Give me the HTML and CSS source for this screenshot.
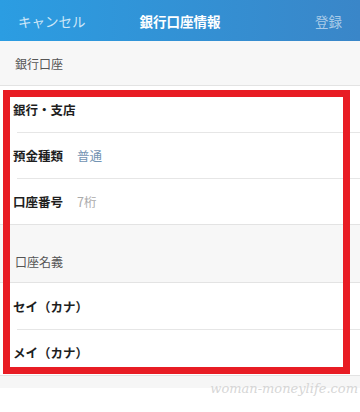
FILE: index.html
```html
<!DOCTYPE html>
<html lang="ja">
<head>
<meta charset="UTF-8" />
<meta name="viewport" content="width=device-width, initial-scale=1" />
<title>銀行口座情報</title>
<link rel="stylesheet" href="styles.css">
</head>
<body>

<header class="barra">
  <span class="cancelar">キャンセル</span>
  <span class="titulo">銀行口座情報</span>
  <span class="registrar">登録</span>
</header>

<main class="conteudo">
  <div class="secao">銀行口座</div>

  <div class="grupo">
    <div class="linha"><span class="rotulo">銀行・支店</span></div>
    <div class="linha"><span class="rotulo">預金種類</span><span class="valor azul">普通</span></div>
    <div class="linha"><span class="rotulo">口座番号</span><span class="valor cinza">7桁</span></div>

    <div class="secao secao-alta">口座名義</div>
    <div class="linha"><span class="rotulo">セイ（カナ）</span></div>
    <div class="linha ultima"><span class="rotulo">メイ（カナ）</span></div>

    <!-- destaque vermelho por cima das linhas -->
    <div class="destaque"></div>
  </div>

  <div class="rodape">
    <span class="marca">woman-moneylife.com</span>
  </div>
</main>

</body>
</html>
```

FILE: styles.css
```css
/* Reset e básicos */
body, html {
  margin: 0; padding: 0;
  font-family: "Noto Sans CJK JP", "Noto Sans", sans-serif;
  background: #fff;
  color: #222;
}

.barra {
  height: 41px;
  background: linear-gradient(to right, #2b9de2, #3a86c8);
  display: flex;
  align-items: center;
  justify-content: space-between;
  padding: 0 18px;
  font-size: 13.5px;
}
.cancelar {
  color: #cfe7f8;
  width: 70px;
}
.titulo {
  color: #fff;
  font-weight: 700;
}
.registrar {
  color: #a9cbe8;
  width: 70px;
  text-align: right;
}

.secao {
  background: #f7f7f7;
  color: #555;
  font-size: 12px;
  height: 44px;
  display: flex;
  align-items: center;
  padding: 0 15px;
  border-bottom: 1px solid #e3e3e3;
}
.secao-alta {
  height: 59px;
  align-items: flex-end;
  box-sizing: border-box;
  padding-bottom: 12px;
  border-top: 1px solid #e3e3e3;
}

.grupo {
  position: relative;
}

.linha {
  height: 46px;
  display: flex;
  align-items: center;
  gap: 14px;
  padding-left: 13px;
  position: relative;
  background: #fff;
}
.linha + .linha::before {
  content: "";
  position: absolute;
  top: 0; left: 17px; right: 0;
  border-top: 1px solid #e6e6e6;
}
.linha.ultima {
  border-bottom: 1px solid #e3e3e3;
}

.rotulo {
  font-weight: 700;
  font-size: 12.5px;
  color: #1e1e1e;
}
.valor {
  font-size: 12.5px;
}
.valor.azul { color: #7394b3; }
.valor.cinza { color: #aaa; }

.destaque {
  position: absolute;
  top: 4px; left: 3px;
  width: 347px;
  height: 284px;
  box-sizing: border-box;
  border: 7px solid #e81c24;
}

.rodape {
  background: linear-gradient(#f6f6f6 0, #f6f6f6 12px, #fff 12px);
  height: 40px;
  display: flex;
  justify-content: flex-end;
  padding-right: 2px;
}
.marca {
  font-family: "DejaVu Serif", serif;
  font-style: italic;
  font-size: 13px;
  color: #d6d6d6;
  margin-top: 5px;
}
```
